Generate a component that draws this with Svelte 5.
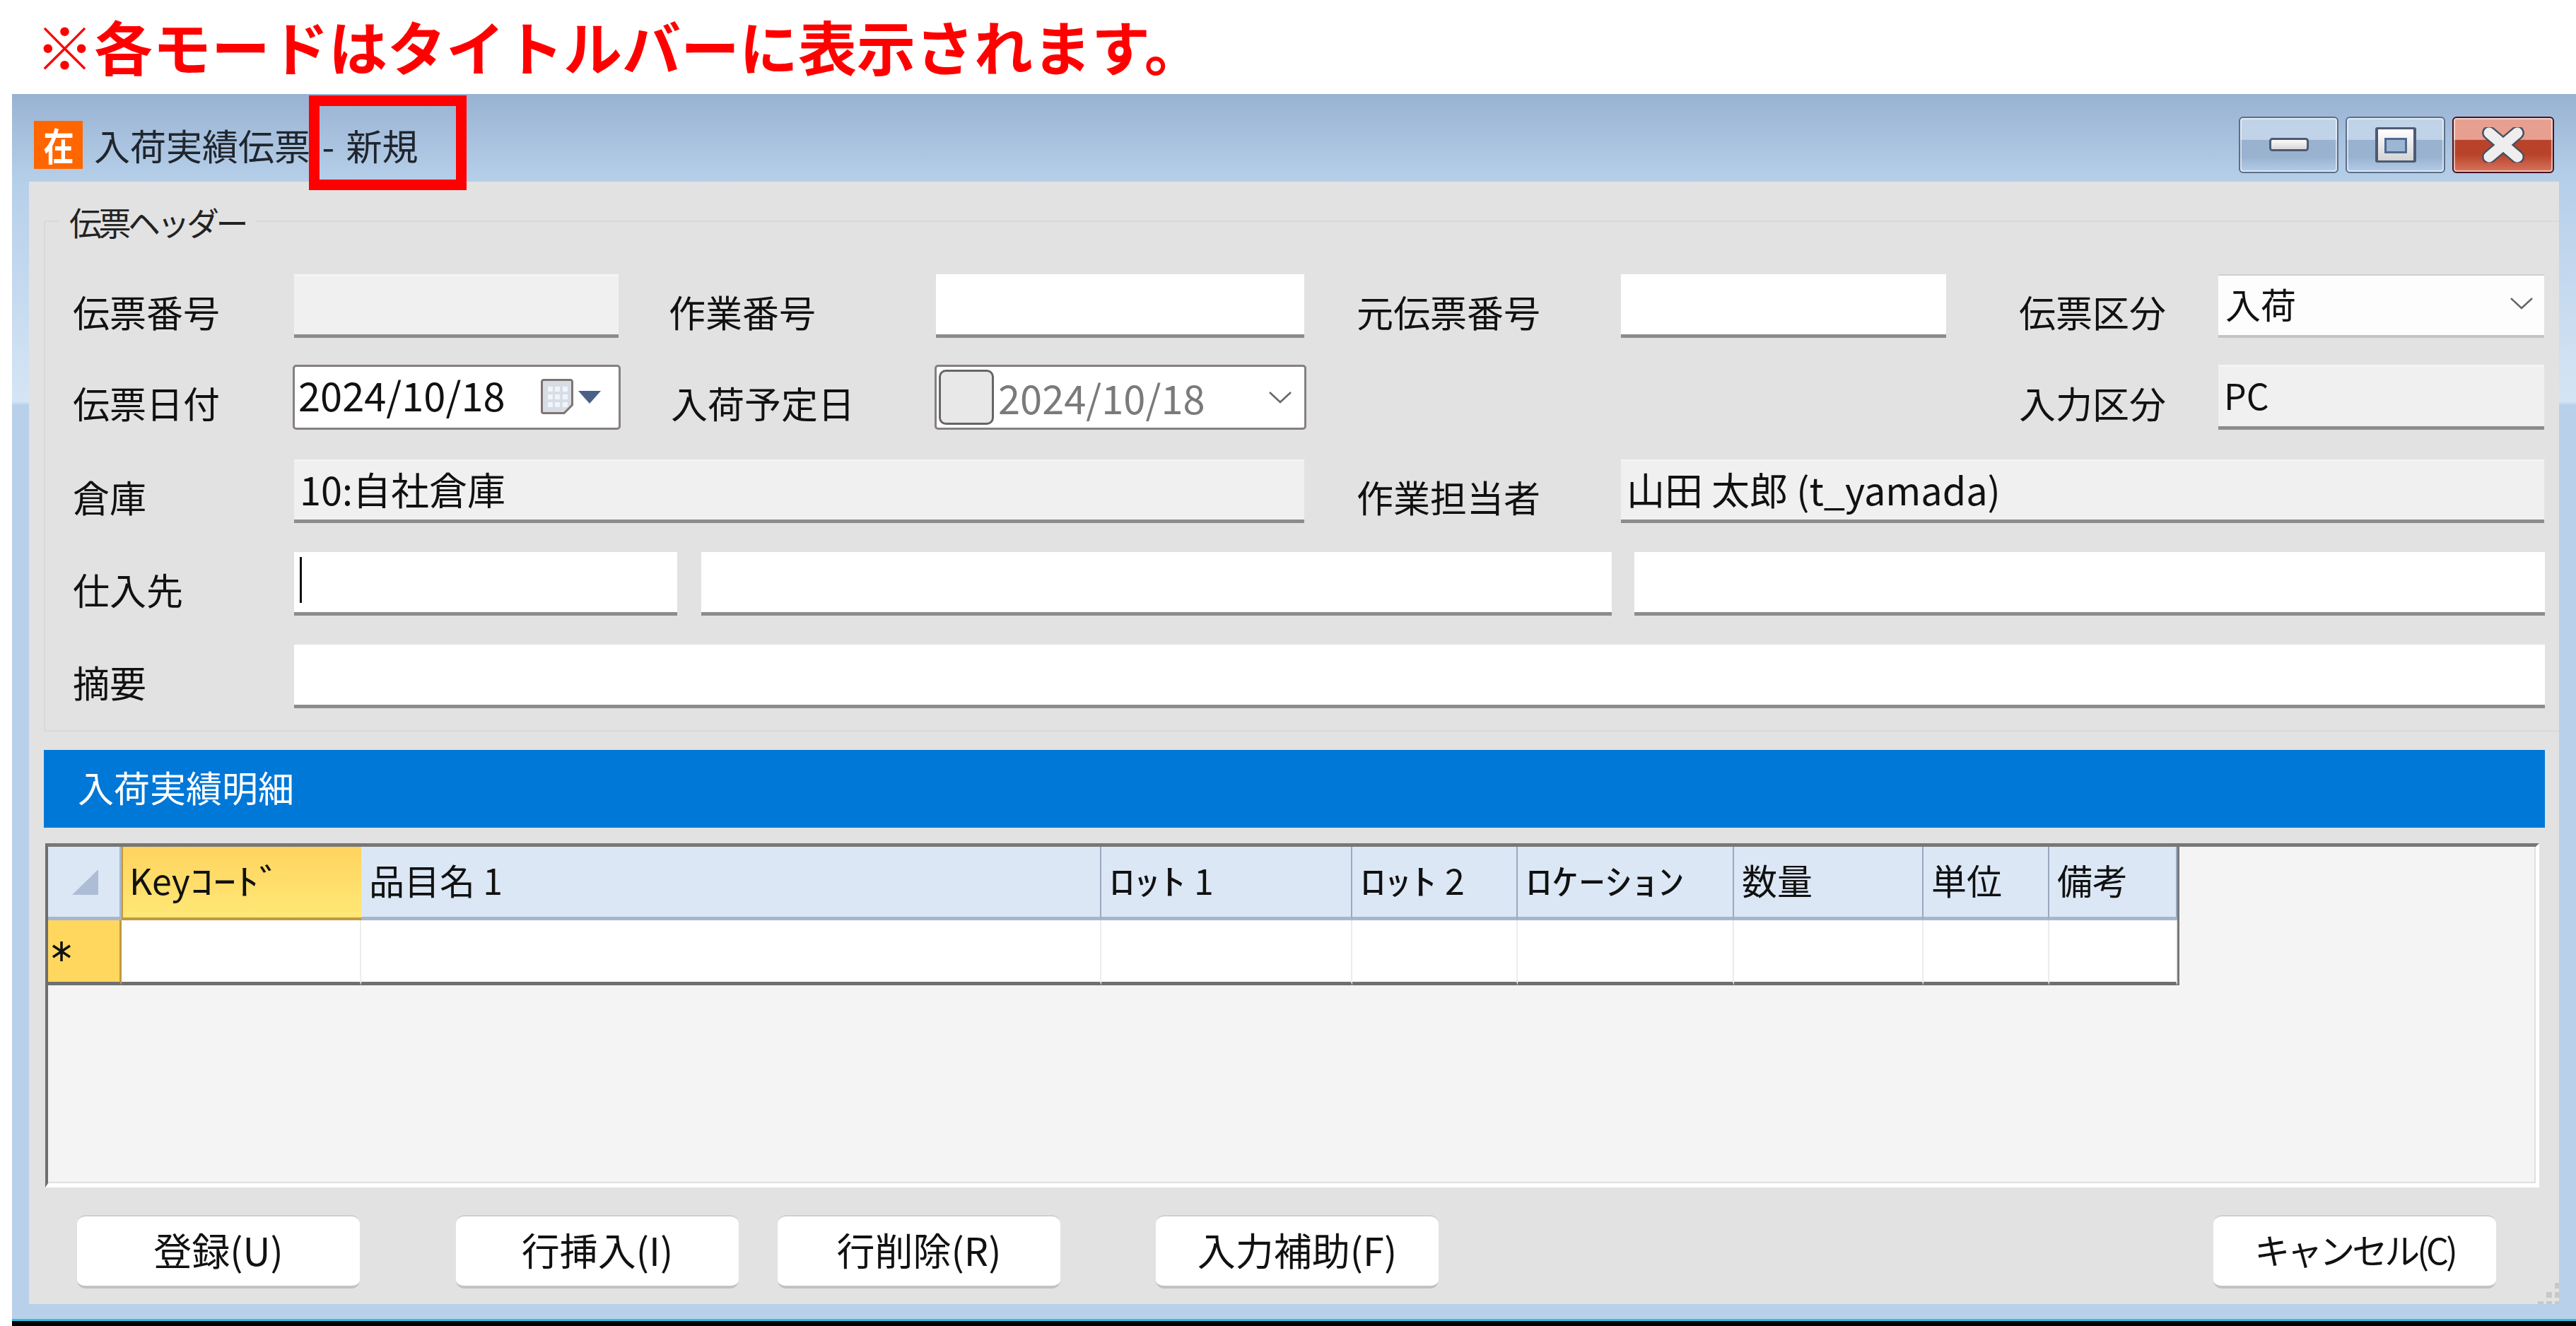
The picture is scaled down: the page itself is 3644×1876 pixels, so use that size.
<script>
  const columns = [
    { pre: "Key", kana: "ｺｰﾄﾞ", scale: 1.3, width: 339, active: true },
    { pre: "品目名 1", width: 1047 },
    { kana: "ﾛｯﾄ", post: " 1", scale: 1.45, width: 355 },
    { kana: "ﾛｯﾄ", post: " 2", scale: 1.45, width: 234 },
    { kana: "ﾛｹｰｼｮﾝ", scale: 1.5, width: 306 },
    { pre: "数量", width: 268 },
    { pre: "単位", width: 178 },
    { pre: "備考", width: 181 },
  ];
  const gridColumns = "104px " + columns.map((c) => c.width + "px").join(" ");
</script>

<div class="page">
  <h1 class="note">※各モードはタイトルバーに表示されます。</h1>

  <div class="window">
    <div class="annotation"></div>

    <div class="titlebar">
      <span class="appIcon"><span class="appGlyph">在</span></span>
      <span class="title">入荷実績伝票 - 新規</span>
      <div class="controls">
        <button class="ctl" aria-label="最小化">
          <svg width="56" height="20" viewBox="0 0 56 20">
            <defs>
              <linearGradient id="glyph" x1="0" y1="0" x2="0" y2="1">
                <stop offset="0" stop-color="#ffffff" />
                <stop offset="1" stop-color="#d4d4d4" />
              </linearGradient>
            </defs>
            <rect x="1.5" y="1.5" width="53" height="16" rx="3" fill="url(#glyph)" stroke="#4f5a72" stroke-width="3" />
          </svg>
        </button>
        <button class="ctl" aria-label="最大化">
          <svg width="58" height="50" viewBox="0 0 58 50">
            <path d="M3 0h52a3 3 0 0 1 3 3v44a3 3 0 0 1-3 3H3a3 3 0 0 1-3-3V3a3 3 0 0 1 3-3z" fill="#4f5a72" />
            <path d="M4 3h50v44H4z M13 15v22h32V15z" fill="url(#glyph)" fill-rule="evenodd" />
            <path d="M13 15h32v22H13z" fill="#4f6a90" />
            <path d="M16 18h26v16H16z" fill="#9db6d4" />
          </svg>
        </button>
        <button class="ctl close" aria-label="閉じる">
          <svg width="60" height="50" viewBox="0 0 60 50">
            <path d="M10 8 L50 42 M50 8 L10 42" stroke="#4a4f60" stroke-width="20" stroke-linecap="round" />
            <path d="M10 8 L50 42 M50 8 L10 42" stroke="#eeeeee" stroke-width="15" stroke-linecap="round" />
          </svg>
        </button>
      </div>
    </div>

    <div class="pane">
      <fieldset class="group">
        <legend>伝票ヘッダー</legend>

        <div class="row r1">
          <span class="label">伝票番号</span>
          <div class="field readonly"></div>
          <span class="label second">作業番号</span>
          <div class="field"></div>
          <span class="label third">元伝票番号</span>
          <div class="field"></div>
          <span class="label fourth">伝票区分</span>
          <div class="field select">
            <span>入荷</span>
            <svg class="chevron" width="34" height="18" viewBox="0 0 34 18"><path d="M2 2 L17 16 L32 2" fill="none" stroke="#666" stroke-width="2.5" /></svg>
          </div>
        </div>

        <div class="row r2">
          <span class="label">伝票日付</span>
          <div class="field boxed">
            <span class="date">2024/10/18</span>
            <svg class="calendar" width="46" height="52" viewBox="0 0 46 52">
              <path d="M4 1.5h38a2.5 2.5 0 0 1 2.5 2.5v33L33 48.5H4A2.5 2.5 0 0 1 1.5 46V4A2.5 2.5 0 0 1 4 1.5z" fill="#d8dce4" stroke="#7d7472" stroke-width="3" />
              {#each [11, 22, 33] as y}
                {#each [10, 20, 31] as x}
                  <rect x={x} y={y} width="7" height="7" fill="#f1f4fa" />
                {/each}
              {/each}
            </svg>
            <svg width="32" height="18" viewBox="0 0 32 18"><path d="M0 0h32L16 18z" fill="#4a6088" /></svg>
          </div>
          <span class="label second">入荷予定日</span>
          <div class="field boxed planned">
            <span class="check"></span>
            <span class="date off">2024/10/18</span>
            <svg class="chevronPlanned" width="34" height="18" viewBox="0 0 34 18"><path d="M2 2 L17 16 L32 2" fill="none" stroke="#666" stroke-width="2.5" /></svg>
          </div>
          <span class="label fourth">入力区分</span>
          <div class="field readonly short">PC</div>
        </div>

        <div class="row r3">
          <span class="label">倉庫</span>
          <div class="field readonly">10:自社倉庫</div>
          <span class="label third">作業担当者</span>
          <div class="field readonly">山田 太郎 (t_yamada)</div>
        </div>

        <div class="row r4">
          <span class="label">仕入先</span>
          <div class="field"><span class="cursor"></span></div>
          <div class="field"></div>
          <div class="field"></div>
        </div>

        <div class="row r5">
          <span class="label">摘要</span>
          <div class="field"></div>
        </div>
      </fieldset>

      <div class="sectionBar">入荷実績明細</div>

      <div class="gridBox">
        <div class="gridTable" style="grid-template-columns: {gridColumns}">
          <div class="head corner">
            <svg width="37" height="36" viewBox="0 0 37 36"><path d="M37 0v36H0z" fill="#aebdd6" /></svg>
          </div>
          {#each columns as col}
            <div class="head" class:active={col.active}>
              {#if col.pre}<span class="plain">{col.pre}</span>{/if}
              {#if col.kana}
                <span
                  class="kana"
                  style="width: {col.kana.length * 25 * col.scale}px; transform: scaleX({col.scale})"
                >{col.kana}</span>
              {/if}
              {#if col.post}<span class="plain">{col.post}</span>{/if}
            </div>
          {/each}
          <div class="rowHead">
            <svg width="30" height="30" viewBox="0 0 30 30">
              <path d="M15 1v28M3 7l24 16M27 7L3 23" stroke="#111" stroke-width="3.5" />
            </svg>
          </div>
          {#each columns as col}
            <div class="cell"></div>
          {/each}
        </div>
      </div>

      <div class="actions">
        <button class="btn">登録(U)</button>
        <button class="btn">行挿入(I)</button>
        <button class="btn">行削除(R)</button>
        <button class="btn">入力補助(F)</button>
        <button class="btn cancel">キャンセル(C)</button>
      </div>

      <svg class="grip" width="30" height="30" viewBox="0 0 30 30">
        <path d="M24 0h6v8h-6z M24 13h6v8h-6z M12 13h8v8h-8z M24 26h6v4h-6z M12 26h8v4h-8z M0 26h8v4H0z" fill="#c8c8c8" />
      </svg>
    </div>
  </div>
</div>

<style>
  :global(body) {
    margin: 0;
    background: #ffffff;
  }

  .page {
    width: 3644px;
    height: 1876px;
    overflow: hidden;
    font-family: "Noto Sans CJK JP", "Noto Sans", sans-serif;
    color: #111111;
  }

  .note {
    height: 133px;
    margin: 0;
    padding: 2px 0 0 50px;
    box-sizing: border-box;
    font-size: 83px;
    line-height: 124px;
    font-weight: 700;
    color: #ff0000;
    white-space: nowrap;
  }

  .window {
    position: relative;
    display: flex;
    flex-direction: column;
    box-sizing: border-box;
    height: 1743px;
    margin-left: 17px;
    padding: 0 24px 24px;
    border-bottom: 7px solid #000000;
    background: linear-gradient(
      180deg,
      #98b2d2 0,
      #b6cfe9 124px,
      #d5e5f5 435px,
      #b9d0ea 440px,
      #b9d0ea 100%
    );
    box-shadow: inset 0 -3px 0 #27c0e0;
  }

  .annotation {
    position: absolute;
    z-index: 1;
    left: 420px;
    top: 2px;
    width: 223px;
    height: 134px;
    box-sizing: border-box;
    border: 15px solid #ff0000;
  }

  .titlebar {
    display: flex;
    align-items: center;
    height: 124px;
    box-sizing: border-box;
    padding: 20px 7px 0;
    flex: none;
  }

  .appIcon {
    display: flex;
    align-items: center;
    justify-content: center;
    width: 69px;
    height: 68px;
    background: #ff6600;
    color: #ffffff;
    font-size: 54px;
    font-weight: 700;
    line-height: 1;
  }

  .appGlyph {
    display: inline-block;
    transform: scaleX(0.8);
  }

  .title {
    margin-left: 16px;
    font-size: 51px;
    line-height: 60px;
    word-spacing: 5px;
    color: #20262e;
  }

  .controls {
    display: flex;
    gap: 10px;
    margin-left: auto;
  }

  .ctl {
    display: flex;
    align-items: center;
    justify-content: center;
    width: 141px;
    height: 80px;
    padding: 0;
    box-sizing: border-box;
    border: 2px solid #5c6f8a;
    border-radius: 6px;
    background: linear-gradient(180deg, #c0d3e8 0, #c0d3e8 40%, #98b2d0 41%, #98b2d0 72%, #b4cce8 100%);
    box-shadow: inset 0 0 0 2px rgba(255, 255, 255, 0.55);
  }

  .close {
    width: 144px;
    border-color: #4a1420;
    background: linear-gradient(180deg, #e7a090 0, #e7a090 40%, #b9432a 41%, #b9432a 68%, #d9745e 100%);
  }

  .pane {
    position: relative;
    flex: 1;
    display: flex;
    flex-direction: column;
    background: #e2e2e2;
    padding-top: 31px;
    min-height: 0;
  }

  .group {
    margin: 0 0 0 21px;
    padding: 50px 20px 31px 39px;
    border: 2px solid #d9d9d9;
    border-right: none;
    min-width: 0;
  }

  .group legend {
    margin-left: -20px;
    padding: 0 15px;
    font-size: 46px;
    letter-spacing: -4.5px;
    line-height: 50px;
    color: #222222;
  }

  .row {
    display: grid;
    align-items: center;
    height: 90px;
    font-size: 52px;
  }

  .r1 {
    grid-template-columns: 313px 459px 449px 521px 448px 460px 385px 461px;
  }

  .r2 {
    margin-top: 38px;
    height: 92px;
    grid-template-columns: 311px 464px 444px 526px 1290px 461px;
  }

  .r3 {
    margin-top: 42px;
    grid-template-columns: 313px 1429px 448px 1306px;
  }

  .r4 {
    margin-top: 41px;
    grid-template-columns: 313px 542px 1322px 1320px;
  }

  .r5 {
    margin-top: 41px;
    grid-template-columns: 313px 3184px;
  }

  .label {
    padding-top: 16px;
    white-space: nowrap;
    line-height: 60px;
  }

  .r1 .second,
  .r2 .second {
    padding-left: 71px;
  }

  .r1 .third,
  .r3 .third {
    padding-left: 74px;
  }

  .r1 .fourth {
    padding-left: 103px;
  }

  .r2 .fourth {
    padding-left: 1008px;
  }

  .field {
    display: flex;
    align-items: center;
    box-sizing: border-box;
    height: 100%;
    padding: 0 8px;
    background: #ffffff;
    border-bottom: 5px solid #8c8c8c;
    line-height: 60px;
    white-space: nowrap;
  }

  .r4 .field:nth-of-type(2) {
    margin-left: 34px;
  }

  .r4 .field:nth-of-type(3) {
    margin-left: 32px;
  }

  .readonly {
    background: #f0f0f0;
    border-top: 3px solid #f4f4f4;
    font-size: 54px;
    padding-bottom: 4px;
  }

  .short {
    font-size: 50px;
    padding-bottom: 6px;
  }

  .select {
    justify-content: space-between;
    background: #fdfdfd;
    border-top: 2px solid #cfcfcf;
    border-bottom: 4px solid #c4c4c4;
    font-size: 50px;
    padding: 0 8px 6px 10px;
  }

  .chevron {
    margin-right: 7px;
  }

  .boxed {
    border: 3px solid #858080;
    border-radius: 5px;
    padding: 0 5px;
  }

  .date {
    font-size: 56px;
    padding-bottom: 8px;
  }

  .off {
    color: #7a7a7a;
    margin-left: 6px;
    padding-bottom: 0;
  }

  .calendar {
    margin-left: 50px;
    margin-right: 7px;
  }

  .planned {
    padding-left: 3px;
  }

  .check {
    width: 78px;
    height: 78px;
    box-sizing: border-box;
    border: 3px solid #666666;
    border-radius: 10px;
    background: #e8e8e8;
    flex: none;
  }

  .chevronPlanned {
    margin-left: auto;
    margin-right: 12px;
  }

  .cursor {
    width: 3px;
    height: 65px;
    margin: 0 0 6px 0;
    background: #111111;
  }

  .sectionBar {
    margin: 26px 20px 0 21px;
    height: 110px;
    padding-left: 48px;
    background: #0078d7;
    color: #ffffff;
    font-size: 51px;
    line-height: 104px;
    flex: none;
  }

  .gridBox {
    flex: none;
    height: 487px;
    margin: 22px 28px 0 23px;
    box-sizing: border-box;
    border-top: 5px solid #777777;
    border-left: 4px solid #6e6e6e;
    border-right: 5px solid #ffffff;
    border-bottom: 6px solid #ffffff;
    background: #f4f4f4;
    box-shadow: inset 0 -2px 0 #e0e0e0, inset -2px 0 0 #e0e0e0;
  }

  .gridTable {
    display: grid;
    grid-template-rows: 104px 92px;
    width: 3015px;
    box-sizing: border-box;
    border-right: 3px solid #777777;
    font-size: 50px;
  }

  .head {
    display: flex;
    align-items: center;
    box-sizing: border-box;
    padding: 0 0 8px 11px;
    background: #dbe7f5;
    border-right: 2px solid #9aa9bf;
    border-bottom: 5px solid #a6b6cc;
    line-height: 60px;
    white-space: pre;
  }

  .kana {
    display: inline-block;
    transform-origin: left center;
    flex: none;
  }

  .corner {
    justify-content: flex-end;
    padding: 0 30px 0 0;
    border-right: 3px solid #a6b6cc;
    border-bottom-color: #a6b6cc;
  }

  .active {
    padding-left: 9px;
    background: linear-gradient(180deg, #ffd35f 0, #ffe876 100%);
    border-left: 2px solid #c2983f;
    border-right: none;
    border-bottom: 4px solid #c2983f;
  }

  .rowHead {
    display: flex;
    align-items: center;
    padding-left: 4px;
    box-sizing: border-box;
    background: #ffd75f;
    border-right: 3px solid #c2983f;
    border-bottom: 5px solid #6f6f6f;
  }

  .cell {
    background: #ffffff;
    border-right: 2px solid #ececec;
    border-bottom: 5px solid #6f6f6f;
  }

  .actions {
    display: flex;
    margin-top: 39px;
    padding: 0 89px 0 68px;
  }

  .btn {
    width: 400px;
    height: 104px;
    margin-right: 136px;
    padding: 0 0 6px;
    box-sizing: border-box;
    border: none;
    border-top: 2px solid #cfcfcf;
    border-bottom: 4px solid #c2c2c2;
    border-radius: 12px;
    background: #ffffff;
    color: #111111;
    font-family: inherit;
    font-size: 54px;
    white-space: nowrap;
  }

  .btn:nth-child(2) {
    margin-right: 55px;
  }

  .btn:nth-child(3) {
    margin-right: 135px;
  }

  .cancel {
    margin-left: auto;
    margin-right: 0;
    font-size: 50px;
    letter-spacing: -4px;
  }

  .grip {
    position: absolute;
    right: 0;
    bottom: 0;
  }
</style>
